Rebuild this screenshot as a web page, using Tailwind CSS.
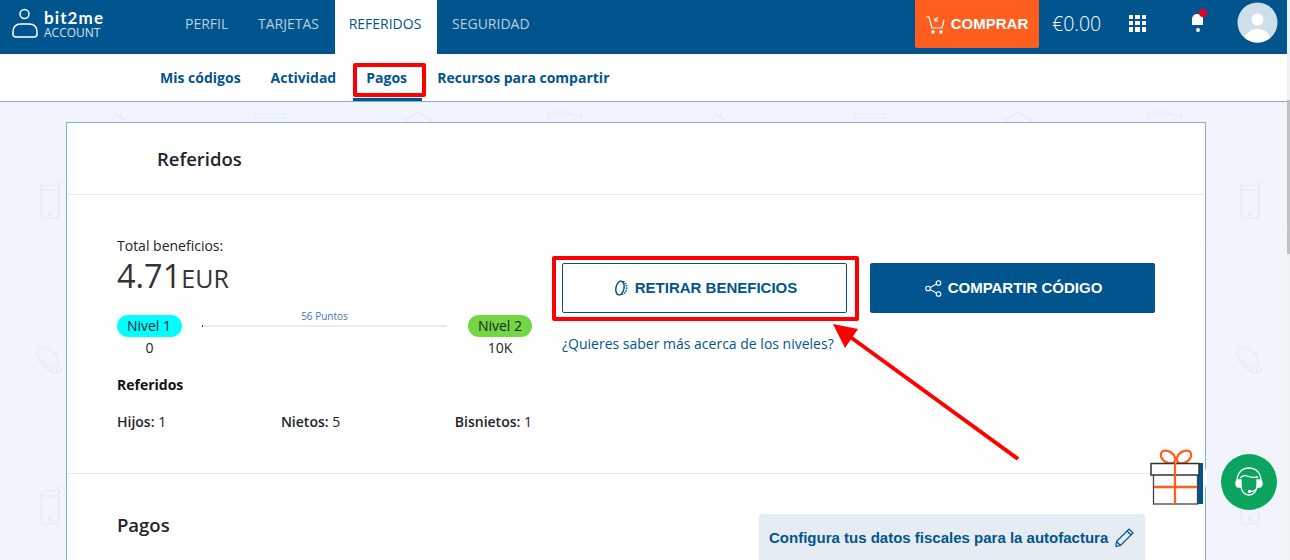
<!DOCTYPE html>
<html lang="es">
<head>
    <meta charset="UTF-8">
    <title>bit2me Account - Referidos</title>
    <script src="https://cdn.jsdelivr.net/npm/@tailwindcss/browser@4"></script>
</head>
<body class="relative h-[560px] w-[1290px] overflow-hidden bg-[#f1f5fb] font-['Open_Sans',sans-serif] text-[#212529]">
    <!-- Background pattern -->
    <svg class="absolute left-0 top-0" width="1287" height="560" fill="none" stroke="#e3ebf2" stroke-width="1.2">
        <defs>
            <g id="phone">
                <rect x="41" y="185" width="18" height="33" rx="2"/>
                <path d="M41 190h18"/><circle cx="50" cy="213.500" r="1.500"/>
                <path d="M57 183a5 5 0 0 1 4 4M58 179a9 9 0 0 1 7 7"/>
            </g>
            <g id="coin">
                <ellipse cx="48" cy="357" rx="13" ry="7" transform="rotate(40 48 357)"/>
                <path d="M38 358c0 4 12 15 18 15 3 0 6-1 6-5M42 364l3-3M46 368l2-3M51 371l2-4M56 373l1-4"/>
            </g>
            <g id="top-icons">
                <path d="M112 122c0-4 3-6 5-6l6 3c2 1 3 1 2 3M116 116l-1-4M120 117l1-4"/>
                <path d="M255 122v-7a1 1 0 0 1 1-1h28a1 1 0 0 1 1 1v7M255 118h30"/>
                <path d="M405 122v-2l13-8 13 8v2M405 120l3 2M431 120l-3 2"/>
                <path d="M548 122v-9a1 1 0 0 1 1-1h20v3h12v7M548 115h8M560 115h9"/>
                <path d="M271 105v4M400 105l3 4" stroke-dasharray="1 2"/>
            </g>
        </defs>
        <use href="#phone"/>
        <use href="#phone" transform="translate(1200 0)"/>
        <use href="#phone" transform="translate(0 306)"/>
        <use href="#phone" transform="translate(1200 306)"/>
        <use href="#coin"/>
        <use href="#coin" transform="translate(1200 0)"/>
        <use href="#top-icons"/>
        <use href="#top-icons" transform="translate(600 0)"/>
        <g stroke-dasharray="1 3">
            <path d="M37 218L0 255M0 315l32 32M62 346l4-5"/>
            <path d="M1236 218l-30 30M1271 219l16 16M1206 320l26 26M1287 320l-25 26"/>
        </g>
    </svg>

    <!-- Top bar -->
    <header class="relative flex h-[54px] w-[1287px] items-center bg-[#01558f] text-white">
        <div class="mb-[6px] flex w-[171px] shrink-0 items-center pl-[12px]">
            <svg width="26" height="32" viewBox="0 0 26 32" fill="none" stroke="white" stroke-width="1.500">
                <circle cx="12.500" cy="6" r="4.500"/>
                <path d="M1 24c0-5 3-8 8-8h8c5 0 8 3 8 8v2a3 3 0 0 1-3 3H4a3 3 0 0 1-3-3z"/>
            </svg>
            <div class="ml-[6px] flex flex-col">
                <span class="font-['Lato',sans-serif] text-[17px] font-bold leading-[18px] tracking-[1.1px]">bit2me</span>
                <span class="text-[12px] leading-[12px] text-[#d5e4ee]">ACCOUNT</span>
            </div>
        </div>
        <nav class="flex h-full w-[359px] shrink-0 items-center text-[14px] text-[#b9cfde]">
            <a class="mb-[8px] w-[73px] pl-[14px]">PERFIL</a>
            <a class="mb-[8px] w-[91px] pl-[14px]">TARJETAS</a>
            <a class="flex h-full w-[102px] items-center justify-center bg-white pb-[8px] pr-[2px] text-[#01558f]">REFERIDOS</a>
            <a class="mb-[8px] w-[93px] pl-[15px]">SEGURIDAD</a>
        </nav>
        <button class="ml-[385px] flex h-[48px] w-[124px] shrink-0 self-start items-center justify-center gap-[6px] rounded-b-[2px] bg-[#ff5e1f] font-['Liberation_Sans',sans-serif] text-[15px] font-bold">
            <svg width="19" height="19" viewBox="0 0 19 19" fill="none" stroke="white" stroke-width="1.200">
                <path d="M0 2h3l3 11h10l2-8"/><path d="M12 2L9 6M9 3v3h3"/><circle cx="7" cy="17" r="1.200" fill="white"/><circle cx="15" cy="17" r="1.200" fill="white"/>
            </svg>
            COMPRAR
        </button>
        <span class="mb-[7px] ml-[13px] w-[50px] shrink-0 whitespace-nowrap text-[19.500px] font-light">€0.00</span>
        <div class="mb-[8px] ml-[27px] grid h-[17px] w-[17px] shrink-0 grid-cols-3 gap-[2px]">
            <i class="bg-white"></i><i class="bg-white"></i><i class="bg-white"></i>
            <i class="bg-white"></i><i class="bg-white"></i><i class="bg-white"></i>
            <i class="bg-white"></i><i class="bg-white"></i><i class="bg-white"></i>
        </div>
        <div class="relative mb-[8px] ml-[46px] h-[18px] w-[11px] shrink-0">
            <div class="h-[11px] w-[11px] rounded-t-[5px] bg-white"></div>
            <div class="mx-auto mt-[3px] h-[4px] w-[4px] rounded-full bg-white"></div>
            <div class="absolute left-[7px] top-[-5px] h-[8px] w-[8px] rounded-full bg-[#f00020]"></div>
        </div>
        <svg class="mb-[10px] ml-[34px] shrink-0" width="41" height="41" viewBox="0 0 41 41">
            <clipPath id="avatar"><circle cx="20.500" cy="20.500" r="20"/></clipPath>
            <circle cx="20.500" cy="20.500" r="20" fill="#cfdfe9"/>
            <g clip-path="url(#avatar)" fill="white"><circle cx="20.500" cy="17.500" r="6"/><ellipse cx="20.500" cy="38" rx="13" ry="11"/></g>
        </svg>
    </header>

    <!-- Sub navigation -->
    <nav class="relative flex h-[48px] w-[1287px] border-b border-[#7fb0cc] bg-white pl-[160px] text-[14px] font-bold text-[#01558f]">
        <a class="mt-[13px]">Mis códigos</a>
        <a class="ml-[30px] mt-[13px]">Actividad</a>
        <a class="ml-[17px] h-[47px] w-[69px] border-b-[3px] border-[#01558f] pl-[13px] pt-[13px]">Pagos</a>
        <a class="ml-[15px] mt-[13px]">Recursos para compartir</a>
    </nav>

    <!-- Main card -->
    <main class="relative ml-[66px] mt-[20px] h-[438px] w-[1140px] border border-b-0 border-[#7fb5d3] bg-white">
        <div class="h-[72px] border-b border-[#e4ebf2] pl-[90px] pt-[23px] text-[18.500px] font-semibold leading-[26px]">Referidos</div>

        <section class="flex h-[279px] border-b border-[#e4ebf2] pl-[50px] pt-[42px]">
            <div class="w-[415px]">
                <p class="text-[14px] leading-[18px]">Total beneficios:</p>
                <p class="mt-[1px] h-[39px] leading-[39px]"><span class="text-[32.500px] text-[#333]">4.71</span><span class="text-[25px] text-[#333]">EUR</span></p>

                <div class="mt-[16px] flex text-[14px]">
                    <div class="mt-[4px] w-[65px] text-center">
                        <div class="flex h-[22px] items-center justify-center rounded-full bg-[#00ffff] pb-[2px] pr-[1px]">Nivel 1</div>
                        <div class="leading-[21px]">0</div>
                    </div>
                    <div class="ml-[20px] w-[245px]">
                        <div class="h-[11px] text-center text-[10px] leading-[11px] text-[#3f74ad]">56 Puntos</div>
                        <div class="mt-[3px] h-[2px] bg-[#e4ebf3]"><div class="h-[2px] w-[1px] bg-[#01558f]"></div></div>
                    </div>
                    <div class="ml-[21px] mt-[4px] w-[64px] text-center">
                        <div class="flex h-[22px] items-center justify-center rounded-full bg-[#73d643] pb-[2px]">Nivel 2</div>
                        <div class="leading-[21px]">10K</div>
                    </div>
                </div>

                <h3 class="mt-[17px] text-[14px] font-bold leading-[20px] text-[#111]">Referidos</h3>
                <div class="mt-[17px] flex text-[14px] leading-[20px]">
                    <p class="w-[164px]"><span class="font-semibold">Hijos:</span> 1</p>
                    <p class="w-[174px]"><span class="font-semibold">Nietos:</span> 5</p>
                    <p class="whitespace-nowrap"><span class="font-semibold">Bisnietos:</span> 1</p>
                </div>
            </div>

            <div class="ml-[30px] w-[593px]">
                <div class="mt-[26px] flex gap-[23px] font-['Liberation_Sans',sans-serif] text-[15px] font-bold">
                    <button class="flex h-[50px] w-[285px] items-center justify-center gap-[7px] rounded-[2px] border border-[#01558f] bg-white pl-[2px] text-[#01558f]">
                        <svg width="14" height="16" viewBox="0 0 14 16" fill="none" stroke="#01558f" stroke-width="1.500">
                            <ellipse cx="6" cy="8" rx="4" ry="7" transform="rotate(12 6 8)"/>
                            <path d="M9 1.500c3 1 4 4 3.600 7-.4 3-2 5.500-5 6" stroke-dasharray="1.500 1"/>
                        </svg>
                        RETIRAR BENEFICIOS
                    </button>
                    <button class="flex h-[50px] w-[285px] items-center justify-center gap-[6px] rounded-[2px] bg-[#01558f] pl-[2px] text-white">
                        <svg width="17" height="17" viewBox="0 0 17 17" fill="none" stroke="white" stroke-width="1.100">
                            <circle cx="3" cy="8.500" r="2.300"/><circle cx="13.500" cy="3" r="2.300"/><circle cx="13.500" cy="14" r="2.300"/>
                            <path d="M5 7.500l6.500-3.500M5 9.500l6.500 3.500"/>
                        </svg>
                        COMPARTIR CÓDIGO
                    </button>
                </div>
                <a class="mt-[21px] block text-[14px] leading-[20px] text-[#01558f]">¿Quieres saber más acerca de los niveles?</a>
            </div>
        </section>

        <div class="relative pl-[50px] pt-[38px] text-[18.500px] font-semibold leading-[26px]">
            Pagos
            <a class="absolute left-[692px] top-[40px] flex h-[46px] w-[386px] items-start gap-[7px] rounded-t-[3px] bg-[#e5ecf3] pl-[10px] pt-[13px] font-['Liberation_Sans',sans-serif] text-[15px] font-bold leading-[22px] text-[#01558f]">
                Configura tus datos fiscales para la autofactura
                <svg width="20" height="20" viewBox="0 0 20 20" fill="none" stroke="#01558f" stroke-width="1.200"><path d="M1.500 14.500L14 2l4 4L5.500 18.500 1 19.500zM12 4l4 4M1.500 14.500l4 4"/></svg>
            </a>
        </div>
    </main>

    <!-- Gift button -->
    <svg class="absolute left-[1150px] top-[449px]" width="60" height="58" viewBox="0 0 60 58">
        <circle cx="29" cy="29" r="28" fill="white"/>
        <g fill="none" stroke="#ff5e1f" stroke-width="2.300">
            <ellipse cx="18" cy="8" rx="8" ry="5.500" transform="rotate(35 18 8)"/>
            <ellipse cx="34" cy="8" rx="8" ry="5.500" transform="rotate(-35 34 8)"/>
        </g>
        <rect x="47" y="14" width="6" height="41" fill="#01558f"/>
        <rect x="3.500" y="25" width="44" height="30" fill="white" stroke="#444" stroke-width="1.300"/>
        <rect x="1" y="14.500" width="48" height="11.500" fill="white" stroke="#333" stroke-width="1.500"/>
        <path d="M25 14v41M4 38h43" stroke="#ff5e1f" stroke-width="2.300"/>
    </svg>

    <!-- Support button -->
    <div class="absolute left-[1221px] top-[454px] flex h-[56px] w-[56px] items-center justify-center rounded-full bg-[#0ba560]">
        <svg width="32" height="32" viewBox="0 0 32 32" fill="none" stroke="white" stroke-width="1.300">
            <path d="M4 15c0-8 5-13 12-13s12 5 12 13"/>
            <path d="M5 14h3v7H5a2.500 2.500 0 0 1-2-2v-3a2.500 2.500 0 0 1 2-2zM27 14h-3v7h3a2.500 2.500 0 0 0 2-2v-3a2.500 2.500 0 0 0-2-2z" fill="white"/>
            <path d="M7 12c3-3 5-3 7-2s5 2 11 1M7.500 19c1 6 4 10 8.500 10s7.500-4 8.500-10"/>
            <path d="M24 22c-1 2-3 3-6 3.500"/><circle cx="16.500" cy="25.500" r="1" fill="white"/>
        </svg>
    </div>

    <!-- Red annotations -->
    <div class="absolute left-[353px] top-[63px] h-[34px] w-[73px] rounded-[2px] border-[4px] border-[#ff0000]"></div>
    <div class="absolute left-[552px] top-[256px] h-[65px] w-[307px] rounded-[2px] border-[4px] border-[#ff0000]"></div>
    <svg class="absolute left-[825px] top-[315px]" width="200" height="150" viewBox="0 0 200 150">
        <path d="M193 144L24 21" stroke="#ff0000" stroke-width="4"/>
        <path d="M8 9L33 14L20 33z" fill="#ff0000"/>
    </svg>

    <!-- Scrollbar -->
    <div class="absolute right-0 top-0 h-[560px] w-[3px] bg-[#f1f1f1]">
        <div class="mt-[100px] h-[154px] w-[3px] bg-[#c1c1c1]"></div>
    </div>
</body>
</html>
